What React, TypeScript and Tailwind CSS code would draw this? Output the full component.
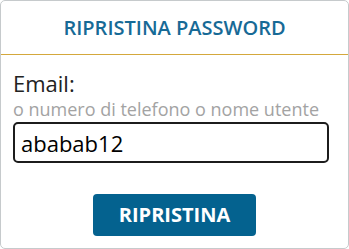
export default function App() {
  return (
    <div className="h-[249px] w-[349px] bg-white font-['Open_Sans',sans-serif]">
      <div className="flex h-full flex-col rounded-[5px] border border-[#c6cacc]">
        <div className="flex h-[54px] shrink-0 items-center justify-center border-b border-[#d4a83c]">
          <h1 className="text-[20px] font-semibold leading-[28px] text-[#176a96]">RIPRISTINA PASSWORD</h1>
        </div>
        <form className="flex flex-col px-[12px] pt-[13px]" onSubmit={(e) => e.preventDefault()}>
          <label htmlFor="user" className="text-[22px] leading-[30px] text-[#222]">
            Email:
          </label>
          <span className="text-[18px] leading-[22px] text-[#a3a3a3]">o numero di telefono o nome utente</span>
          <input
            id="user"
            defaultValue="ababab12"
            className="mt-[2px] h-[41px] w-[316px] rounded-[5px] border-2 border-[#1c1c1c] px-[6px] text-[22px] text-black outline-none"
          />
          <div className="mt-[31px] flex justify-center">
            <button
              type="submit"
              className="h-[42px] w-[163px] rounded-[4px] bg-[#04628f] text-[20px] font-bold text-white"
            >
              RIPRISTINA
            </button>
          </div>
        </form>
      </div>
    </div>
  );
}
